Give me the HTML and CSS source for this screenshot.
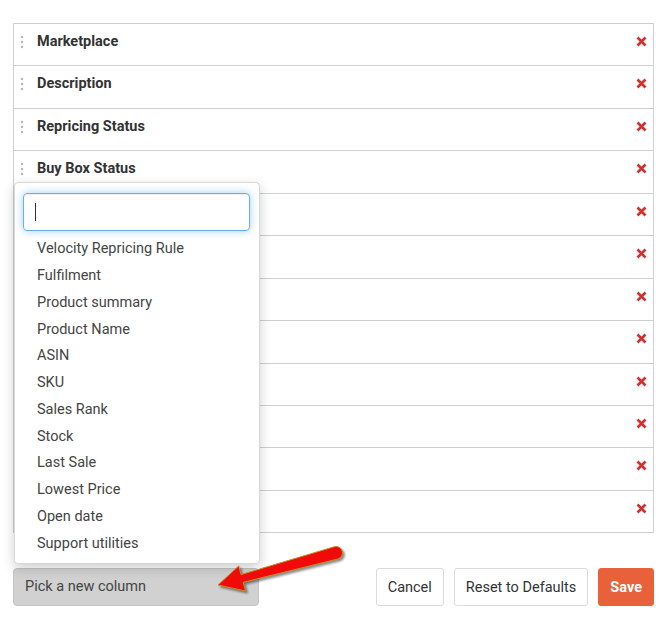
FILE: index.html
```html
<!DOCTYPE html>
<html>
<head>
<meta charset="utf-8">
<link rel="stylesheet" href="styles.css">
</head>
<body>
<div class="page">
  <div class="columns">
    <div class="row"><span class="handle"><svg width="4" height="14" viewBox="0 0 4 14"><circle cx="2" cy="2" r="1.2"/><circle cx="2" cy="7" r="1.2"/><circle cx="2" cy="12" r="1.2"/></svg></span><span class="label">Marketplace</span><span class="remove"><svg width="11" height="11" viewBox="0 0 11 11"><path d="M1.5 1.5L9.5 9.5M9.5 1.5L1.5 9.5"/></svg></span></div>
    <div class="row"><span class="handle"><svg width="4" height="14" viewBox="0 0 4 14"><circle cx="2" cy="2" r="1.2"/><circle cx="2" cy="7" r="1.2"/><circle cx="2" cy="12" r="1.2"/></svg></span><span class="label">Description</span><span class="remove"><svg width="11" height="11" viewBox="0 0 11 11"><path d="M1.5 1.5L9.5 9.5M9.5 1.5L1.5 9.5"/></svg></span></div>
    <div class="row"><span class="handle"><svg width="4" height="14" viewBox="0 0 4 14"><circle cx="2" cy="2" r="1.2"/><circle cx="2" cy="7" r="1.2"/><circle cx="2" cy="12" r="1.2"/></svg></span><span class="label">Repricing Status</span><span class="remove"><svg width="11" height="11" viewBox="0 0 11 11"><path d="M1.5 1.5L9.5 9.5M9.5 1.5L1.5 9.5"/></svg></span></div>
    <div class="row"><span class="handle"><svg width="4" height="14" viewBox="0 0 4 14"><circle cx="2" cy="2" r="1.2"/><circle cx="2" cy="7" r="1.2"/><circle cx="2" cy="12" r="1.2"/></svg></span><span class="label">Buy Box Status</span><span class="remove"><svg width="11" height="11" viewBox="0 0 11 11"><path d="M1.5 1.5L9.5 9.5M9.5 1.5L1.5 9.5"/></svg></span></div>
    <div class="row"><span class="label"></span><span class="remove"><svg width="11" height="11" viewBox="0 0 11 11"><path d="M1.5 1.5L9.5 9.5M9.5 1.5L1.5 9.5"/></svg></span></div>
    <div class="row"><span class="label"></span><span class="remove"><svg width="11" height="11" viewBox="0 0 11 11"><path d="M1.5 1.5L9.5 9.5M9.5 1.5L1.5 9.5"/></svg></span></div>
    <div class="row"><span class="label"></span><span class="remove"><svg width="11" height="11" viewBox="0 0 11 11"><path d="M1.5 1.5L9.5 9.5M9.5 1.5L1.5 9.5"/></svg></span></div>
    <div class="row"><span class="label"></span><span class="remove"><svg width="11" height="11" viewBox="0 0 11 11"><path d="M1.5 1.5L9.5 9.5M9.5 1.5L1.5 9.5"/></svg></span></div>
    <div class="row"><span class="label"></span><span class="remove"><svg width="11" height="11" viewBox="0 0 11 11"><path d="M1.5 1.5L9.5 9.5M9.5 1.5L1.5 9.5"/></svg></span></div>
    <div class="row"><span class="label"></span><span class="remove"><svg width="11" height="11" viewBox="0 0 11 11"><path d="M1.5 1.5L9.5 9.5M9.5 1.5L1.5 9.5"/></svg></span></div>
    <div class="row"><span class="label"></span><span class="remove"><svg width="11" height="11" viewBox="0 0 11 11"><path d="M1.5 1.5L9.5 9.5M9.5 1.5L1.5 9.5"/></svg></span></div>
    <div class="row"><span class="label"></span><span class="remove"><svg width="11" height="11" viewBox="0 0 11 11"><path d="M1.5 1.5L9.5 9.5M9.5 1.5L1.5 9.5"/></svg></span></div>
  </div>

  <div class="footer">
    <div class="picker">
      <div class="dropdown">
        <div class="search"><span class="caret"></span></div>
        <ul class="options">
          <li>Velocity Repricing Rule</li>
          <li>Fulfilment</li>
          <li>Product summary</li>
          <li>Product Name</li>
          <li>ASIN</li>
          <li>SKU</li>
          <li>Sales Rank</li>
          <li>Stock</li>
          <li>Last Sale</li>
          <li>Lowest Price</li>
          <li>Open date</li>
          <li>Support utilities</li>
        </ul>
      </div>
      <div class="pick-btn">Pick a new column</div>
    </div>
    <div class="actions">
      <button class="btn">Cancel</button>
      <button class="btn">Reset to Defaults</button>
      <button class="btn btn-save">Save</button>
    </div>
  </div>

  <svg class="arrow" width="140" height="66" viewBox="0 0 140 66">
    <path d="M13 45 L33.7 25.9 L36.05 34.6 L129.4 6.7 A6.3 6.3 0 0 1 132.8 19 L38.15 42.3 L40.5 51 Z"/>
  </svg>
</div>
</body>
</html>
```

FILE: styles.css
```css
* { box-sizing: border-box; }
html, body { margin: 0; padding: 0; background: #fff; }
body {
  font-family: Roboto, "Liberation Sans", Arial, sans-serif;
  color: #333;
}
.page {
  position: relative;
  width: 669px;
  height: 617px;
  padding: 23px 15px 0 13px;
}
.columns {
  border: 1px solid #cfcfcf;
  border-bottom: none;
}
.row {
  height: 42.45px;
  border-bottom: 1px solid #cfcfcf;
  display: flex;
  align-items: flex-start;
  padding: 9px 0 0 6px;
}
.handle {
  width: 4px;
  height: 14px;
  margin-top: 2px;
  display: flex;
}
.handle svg { fill: #b5b5b5; }
.label {
  margin-left: 13px;
  font-weight: 700;
  font-size: 14.5px;
  line-height: 18px;
  color: #333;
  flex: 1;
}
.row .label:first-child { margin-left: 17px; }
.remove {
  width: 11px;
  height: 11px;
  margin: 3px 6px 0 0;
  display: flex;
}
.remove svg { stroke: #d2302c; stroke-width: 2.6; fill: none; stroke-linecap: butt; }

.footer {
  display: flex;
  justify-content: space-between;
  align-items: flex-start;
  margin-top: 35px;
}
.picker {
  position: relative;
  width: 246px;
}
.pick-btn {
  height: 38px;
  background: #d1d1d1;
  border: 1px solid #c4c4c4;
  border-radius: 4px;
  padding: 0 11px;
  font-size: 14.5px;
  line-height: 36px;
  color: #444;
}
.dropdown {
  position: absolute;
  left: 1px;
  bottom: 42px;
  width: 246px;
  background: #fff;
  border: 1px solid #d8d8d8;
  border-radius: 4px;
  box-shadow: 0 4px 12px rgba(0, 0, 0, 0.2);
  padding: 10px 9px 6px 8px;
}
.search {
  height: 38px;
  border: 1px solid #66afe9;
  border-radius: 4px;
  box-shadow: inset 0 1px 1px rgba(0,0,0,.075), 0 0 8px rgba(102, 175, 233, 0.6);
  padding: 9px 11px;
}
.caret {
  display: block;
  width: 1px;
  height: 18px;
  background: #333;
}
.options {
  list-style: none;
  margin: 5px 0 0 0;
  padding: 0;
}
.options li {
  height: 26.75px;
  line-height: 26.75px;
  font-size: 14.5px;
  padding-left: 14px;
  color: #444;
  white-space: nowrap;
}
.actions {
  display: flex;
  gap: 10px;
}
.btn {
  height: 38px;
  font-family: Roboto, "Liberation Sans", Arial, sans-serif;
  font-size: 14.5px;
  color: #333;
  background: #fff;
  border: 1px solid #dcdcdc;
  border-radius: 3px;
  padding: 0 11px;
  margin: 0;
}
.btn-save {
  background: #e8613a;
  border-color: #e8613a;
  color: #fff;
  font-weight: 700;
}
.arrow {
  position: absolute;
  left: 205px;
  top: 540px;
  overflow: visible;
  filter: drop-shadow(2px 2px 1px rgba(0, 0, 0, 0.45));
}
.arrow path {
  fill: #f00a0a;
  stroke: #c09020;
  stroke-width: 1;
  stroke-linejoin: round;
}
```
